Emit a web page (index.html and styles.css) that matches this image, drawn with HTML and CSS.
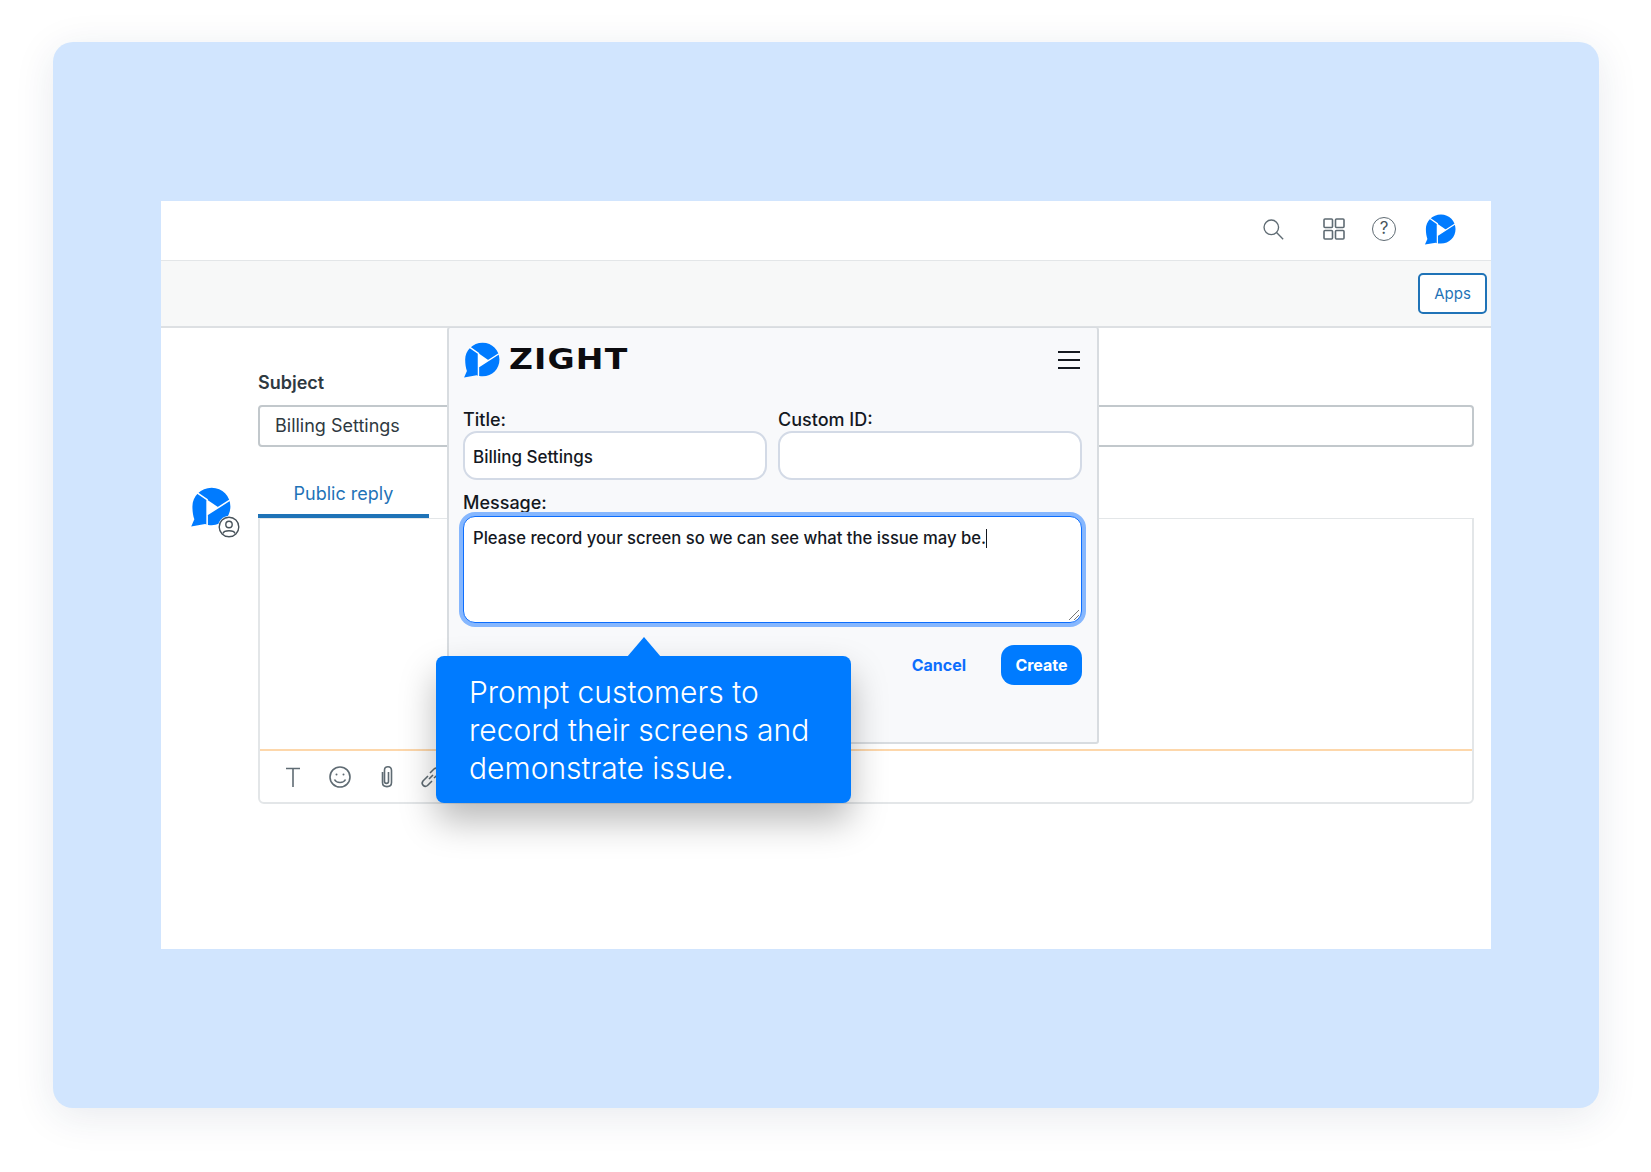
FILE: index.html
```html
<!DOCTYPE html>
<html>
<head>
    <title>Zight - Prompt customers</title>
    <link rel="stylesheet" href="styles.css">
</head>
<body>
    <svg class="defs" width="0" height="0">
        <symbol id="zlogo" viewBox="0 0 34 34">
            <path fill="#007bff" d="M18 1.500C27 1.500 33.500 8.500 33.500 17S27 32.500 18 32.500C16 32.500 14 32.200 12.500 31.500L1 33.500L3.600 27.500C2.600 25 2 21 2 17C2 8.500 9 1.500 18 1.500Z"/>
            <path fill="#fff" d="M14.200 11.300V23.800L23.500 17.700Z"/>
            <path fill="none" stroke="#fff" stroke-width="1.300" d="M6 5.700L14.200 11.300V33M14.200 23.800L33 11.700"/>
        </symbol>
    </svg>

    <div class="card">
        <div class="app">
            <div class="topbar">
                <svg class="ico" width="22" height="22" viewBox="0 0 26 26"><circle cx="11" cy="11" r="8.600"/><path d="M17.200 17.200L25 25"/></svg>
                <svg class="ico grid" width="24" height="24" viewBox="0 0 24 24"><rect x="2" y="2" width="8.500" height="8.500" rx="1"/><rect x="13.500" y="2" width="8.500" height="8.500" rx="1"/><rect x="2" y="13.500" width="8.500" height="8.500" rx="1"/><rect x="13.500" y="13.500" width="8.500" height="8.500" rx="1"/></svg>
                <span class="help">?</span>
                <svg class="toplogo" width="32" height="32"><use href="#zlogo"/></svg>
            </div>
            <div class="toolbar"><button class="apps">Apps</button></div>

            <div class="content">
                <div class="subject-label">Subject</div>
                <div class="subject-input">Billing Settings</div>
                <div class="reply">
                    <div class="avatar">
                        <svg width="41" height="41"><use href="#zlogo"/></svg>
                        <svg class="person" width="22" height="22" viewBox="0 0 22 22"><circle cx="11" cy="11" r="9.800"/><circle cx="11" cy="8.500" r="3.200"/><path d="M5 17.500C6 13.800 16 13.800 17 17.500"/></svg>
                    </div>
                    <div class="editor">
                        <div class="tabs"><span class="tab">Public reply</span></div>
                        <div class="box">
                            <div class="box-body"></div>
                            <div class="box-tools">
                                <svg class="ico" width="20" height="24" viewBox="0 0 20 24"><path d="M3 3.500H17M10 3.500V22"/></svg>
                                <svg class="ico" width="24" height="24" viewBox="0 0 24 24"><circle cx="12" cy="12" r="10"/><circle cx="8.500" cy="9.500" r="1" class="dot"/><circle cx="15.500" cy="9.500" r="1" class="dot"/><path d="M6.500 14.500C8.500 18.500 15.500 18.500 17.500 14.500"/></svg>
                                <svg class="ico clip" width="18" height="24" viewBox="-1 0 18 24"><path d="M3.500 7V17.500C3.500 23 12.500 23 12.500 17.500V5.500C12.500 0.500 5.500 0.500 5.500 5V16.500C5.500 19 9.500 19 9.500 16.500V7"/></svg>
                                <svg class="ico link" width="24" height="24" viewBox="0 0 24 24"><path d="M10 14L14 10M9 11L4 16C1.500 19 5.500 23 8.500 20.500L13 16M11 8L15 4C18 1.500 22.500 5.500 20 8.500L15 13"/></svg>
                            </div>
                        </div>
                    </div>
                </div>
            </div>

            <!-- zight panel lies over the page -->
            <div class="panel">
                <div class="panel-head">
                    <div class="brand">
                        <svg width="37" height="37"><use href="#zlogo"/></svg>
                        <span class="wordmark">ZIGHT</span>
                    </div>
                    <div class="burger"><i></i><i></i><i></i></div>
                </div>
                <div class="row">
                    <div class="field">
                        <label>Title:</label>
                        <div class="input">Billing Settings</div>
                    </div>
                    <div class="field">
                        <label>Custom ID:</label>
                        <div class="input"></div>
                    </div>
                </div>
                <label class="msg-label">Message:</label>
                <div class="textarea">
                    <span>Please record your screen so we can see what the issue may be.</span><span class="caret"></span>
                    <svg class="grip" width="12" height="12" viewBox="0 0 12 12"><path d="M11 1L1 11M11 6L6 11"/></svg>
                </div>
                <div class="actions">
                    <span class="cancel">Cancel</span>
                    <button class="create">Create</button>
                </div>
            </div>

            <div class="callout">Prompt customers to record their screens and demonstrate issue.</div>
        </div>
    </div>
</body>
</html>
```

FILE: styles.css
```css
html, body {
    margin: 0;
    padding: 0;
}
body {
    width: 1651px;
    height: 1172px;
    background: #fff;
    font-family: Inter, "Liberation Sans", sans-serif;
    overflow: hidden;
}
.defs {
    display: block;
    height: 0;
}
.card {
    box-sizing: border-box;
    width: 1546px;
    height: 1066px;
    margin: 42px 0 0 53px;
    padding: 159px 0 0 108px;
    background: #d1e5fe;
    border-radius: 20px;
    box-shadow: 0 8px 40px rgba(30, 50, 90, 0.1);
}
.app {
    position: relative;
    width: 1330px;
    height: 748px;
    background: #fff;
}
.ico {
    fill: none;
    stroke: #5f6b73;
    stroke-width: 1.6;
}
.ico .dot {
    fill: #5f6b73;
    stroke: none;
}
.topbar {
    display: flex;
    align-items: center;
    box-sizing: border-box;
    height: 60px;
    padding: 0 35px 4px 0;
    justify-content: flex-end;
    border-bottom: 1px solid #e3e6e8;
}
.topbar .grid {
    margin-left: 38px;
}
.help {
    box-sizing: border-box;
    width: 24px;
    height: 24px;
    margin-left: 26px;
    border: 1.6px solid #5f6b73;
    border-radius: 50%;
    color: #49545c;
    font-size: 17px;
    line-height: 21px;
    text-align: center;
}
.toplogo {
    margin-left: 28px;
}
.toolbar {
    display: flex;
    justify-content: flex-end;
    align-items: center;
    box-sizing: border-box;
    height: 67px;
    padding: 0 4px 0 0;
    background: #f7f8f8;
    border-bottom: 2px solid #dde0e3;
}
.apps {
    width: 69px;
    height: 41px;
    padding: 0;
    background: #fff;
    border: 2px solid #1f73b7;
    border-radius: 5px;
    color: #1f73b7;
    font-family: inherit;
    font-size: 15px;
}
.content {
    padding: 0 17px 0 97px;
}
.subject-label {
    padding-top: 44px;
    font-size: 18px;
    font-weight: 600;
    line-height: 22px;
    color: #2f3941;
}
.subject-input {
    box-sizing: border-box;
    height: 42px;
    margin-top: 11px;
    padding-left: 15px;
    border: 2px solid #c2c8cc;
    border-radius: 4px;
    font-size: 18px;
    line-height: 38px;
    color: #2f3941;
}
.reply {
    position: relative;
    margin-top: 27px;
}
.avatar {
    position: absolute;
    left: -68px;
    top: 12px;
    width: 52px;
    height: 52px;
}
.person {
    position: absolute;
    left: 28px;
    top: 30px;
    background: #fff;
    border-radius: 50%;
    fill: none;
    stroke: #49545c;
    stroke-width: 1.4;
}
.tabs {
    height: 44px;
}
.tab {
    display: block;
    box-sizing: border-box;
    width: 171px;
    height: 44px;
    border-bottom: 4px solid #1f73b7;
    color: #1f73b7;
    font-size: 18px;
    line-height: 40px;
    text-align: center;
}
.box {
    box-sizing: border-box;
    height: 286px;
    border: 2px solid #e3e6e8;
    border-top-width: 1px;
    border-radius: 0 0 6px 6px;
}
.box-body {
    height: 230px;
    border-bottom: 2px solid #fdd7ab;
}
.box-tools {
    display: flex;
    align-items: center;
    gap: 25px;
    height: 51px;
    padding-left: 23px;
}
.box-tools .clip {
    margin-left: 1px;
}
.box-tools .link {
    margin-left: -2px;
}
.panel {
    position: absolute;
    left: 286px;
    top: 126px;
    box-sizing: border-box;
    width: 652px;
    height: 417px;
    padding: 13px 15px 0 14px;
    background: #f8f9fb;
    border: 2px solid #d8dce0;
    border-top-width: 1px;
    border-radius: 3px;
    font-size: 17px;
    color: #14181f;
}
.panel-head {
    display: flex;
    justify-content: space-between;
    align-items: center;
    height: 37px;
}
.brand {
    display: flex;
    align-items: center;
    gap: 9px;
}
.wordmark {
    font-family: "DejaVu Sans", Inter, sans-serif;
    font-size: 29px;
    font-weight: 700;
    letter-spacing: 1px;
    color: #0c0c0f;
    line-height: 37px;
    transform: scaleX(1.14);
    transform-origin: left center;
}
.burger {
    display: flex;
    flex-direction: column;
    gap: 6px;
    width: 22px;
    margin-right: 2px;
}
.burger i {
    display: block;
    height: 2px;
    background: #14181f;
}
.row {
    display: flex;
    gap: 11px;
    margin-top: 30px;
}
.field {
    flex: 1;
}
.field label, .msg-label {
    display: block;
    height: 23px;
    font-size: 18px;
    font-weight: 500;
    line-height: 23px;
}
.input {
    box-sizing: border-box;
    height: 49px;
    padding-left: 8px;
    background: #fff;
    border: 2px solid #d3dae6;
    border-radius: 14px;
    line-height: 48px;
    font-weight: 500;
}
.msg-label {
    margin-top: 11px;
}
.textarea {
    position: relative;
    box-sizing: border-box;
    height: 107px;
    margin-top: 2px;
    padding: 9px;
    background: #fff;
    border: 1.5px solid #0d6efd;
    border-radius: 12px;
    box-shadow: 0 0 0 4px #86b7fe;
    font-size: 16.65px;
    line-height: 24px;
    font-weight: 500;
}
.caret {
    display: inline-block;
    width: 1px;
    height: 19px;
    vertical-align: -4px;
    background: #14181f;
}
.grip {
    position: absolute;
    right: 1px;
    bottom: 1px;
    fill: none;
    stroke: #777;
}
.actions {
    display: flex;
    justify-content: flex-end;
    align-items: center;
    gap: 35px;
    margin-top: 22px;
}
.cancel {
    color: #0d6efd;
    font-size: 16px;
    font-weight: 700;
}
.create {
    width: 81px;
    height: 40px;
    padding: 0;
    background: #007bff;
    border: 0;
    border-radius: 13px;
    color: #fff;
    font-family: inherit;
    font-size: 16px;
    font-weight: 700;
}
.callout {
    position: absolute;
    left: 275px;
    top: 455px;
    box-sizing: border-box;
    width: 415px;
    height: 147px;
    padding: 17px 20px 0 33px;
    background: #007bff;
    border-radius: 8px;
    box-shadow: 0 18px 36px rgba(0, 0, 0, 0.28);
    color: #fff;
    font-family: Inter, sans-serif;
    font-weight: 300;
    font-size: 30px;
    line-height: 38px;
}
.callout::before {
    content: "";
    position: absolute;
    left: 191px;
    top: -19px;
    border-left: 17px solid transparent;
    border-right: 17px solid transparent;
    border-bottom: 20px solid #007bff;
}
```
